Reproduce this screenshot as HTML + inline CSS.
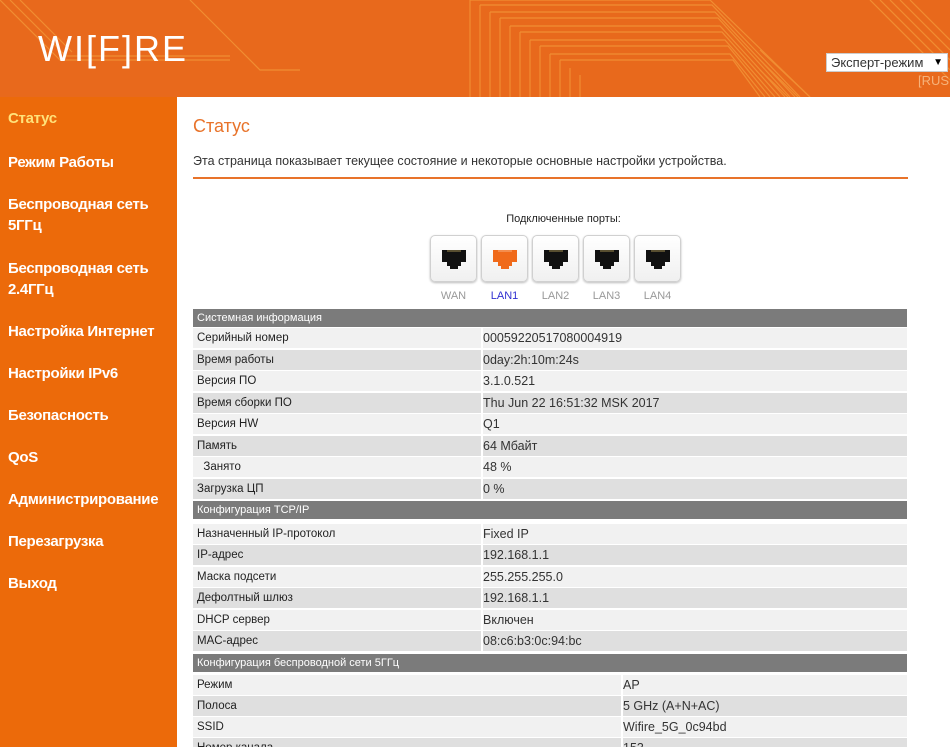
<!DOCTYPE html>
<html><head><meta charset="utf-8"><style>
*{margin:0;padding:0;box-sizing:border-box}
html,body{overflow:hidden}
body{width:950px;height:747px;overflow:hidden;background:#ea6a10;font-family:"Liberation Sans",sans-serif;position:relative}
#hdr{position:absolute;left:0;top:0;width:950px;height:97px;background:#e8691c;overflow:hidden}
#logo{position:absolute;left:38px;top:28px;color:#fff;font-size:36px;letter-spacing:2px;font-weight:normal}
#sel{position:absolute;left:826px;top:53px;width:122px;height:19px;background:#fff;border:1px solid #ccc;font-size:13px;color:#333;padding-left:4px;line-height:17px}
#sel span{position:absolute;right:4px;top:0;font-size:10px;color:#000}
#rus{position:absolute;left:918px;top:73px;color:#f6b27a;font-size:13px}
#side{position:absolute;left:0;top:97px;width:177px;height:650px;background:#ec6a0a}
.m{position:absolute;left:8px;color:#fff;font-weight:bold;font-size:15px;line-height:21px;letter-spacing:-0.3px}
#main{position:absolute;left:177px;top:97px;width:773px;height:650px;background:#fff;overflow:hidden}
h1{position:absolute;left:16px;top:19px;font-size:18px;color:#e8732a;font-weight:normal}
#desc{position:absolute;left:16px;top:57px;font-size:12.5px;color:#333}
#line{position:absolute;left:16px;top:80px;width:715px;height:2px;background:#e8732a}
#pt{position:absolute;left:0;width:773px;top:116px;text-align:center;font-size:11px;color:#222}
.port{position:absolute;top:138px;width:47px;height:47px;border:1px solid #d0d0d0;border-radius:5px;background:linear-gradient(#fff,#f0f0f0);box-shadow:0 1px 2px #bbb}
.port svg{position:absolute;left:11px;top:12px}
.pl{position:absolute;top:193px;width:47px;text-align:center;font-size:11px;color:#999}
.r{position:absolute;left:16px;width:714px;height:20px;font-size:11.5px;color:#222;line-height:20px}
.r .a{position:absolute;left:0;top:0;width:288px;height:20px;padding-left:4px}
.r .b{position:absolute;left:290px;top:0;right:0;height:20px;padding-left:0;font-size:12.5px;color:#333}
.w .a{width:428px}.w .b{left:430px}
.l .a,.l .b{background:#f1f1f1}
.d .a,.d .b{background:#dfdfdf}
.h{background:#7b7b7b;color:#fff;font-size:11px;padding-left:4px;height:18px;line-height:18px}
</style></head><body>
<div id="hdr">
<svg width="950" height="97" style="position:absolute;left:0;top:0" fill="none" stroke="#f39a3a" stroke-width="1.2" opacity=".75">
<g>
<path d="M0 0 L60 60 L230 60"/><path d="M10 0 L66 56 L230 56"/><path d="M20 0 L72 52"/>
<path d="M190 0 L230 40 L260 70 L300 70"/>
<path d="M470 0 L470 97"/><path d="M480 5 L480 97"/><path d="M490 12 L490 97"/><path d="M500 18 L500 97"/><path d="M510 26 L510 97"/><path d="M520 32 L520 97"/><path d="M530 40 L530 97"/><path d="M540 46 L540 97"/><path d="M550 54 L550 97"/><path d="M560 60 L560 97"/><path d="M570 68 L570 97"/><path d="M580 75 L580 97"/>
<path d="M470 0 L710 0 L810 97"/><path d="M480 5 L712 5 L800 97"/><path d="M490 12 L715 12 L795 97"/><path d="M500 18 L718 18 L790 97"/><path d="M510 26 L720 26 L785 97"/><path d="M520 32 L722 32 L780 97"/><path d="M530 40 L725 40 L775 97"/><path d="M540 46 L728 46 L770 97"/><path d="M550 54 L730 54 L765 97"/><path d="M560 60 L733 60 L760 97"/>
<path d="M870 0 L950 80"/><path d="M880 0 L950 70"/><path d="M890 0 L950 60"/><path d="M900 0 L950 50"/><path d="M910 0 L950 40"/>
<path d="M760 50 L810 97"/><path d="M760 60 L798 97"/><path d="M760 70 L788 97"/>
</g></svg>
<div id="logo">WI[F]RE</div>
<div id="sel">Эксперт-режим<span>▼</span></div>
<div id="rus">[RUS</div>
</div>
<div id="side">
<div class="m" style="top:11px;color:#ffe27a">Статус</div>
<div class="m" style="top:55px">Режим Работы</div>
<div class="m" style="top:97px">Беспроводная сеть<br>5ГГц</div>
<div class="m" style="top:161px">Беспроводная сеть<br>2.4ГГц</div>
<div class="m" style="top:224px">Настройка Интернет</div>
<div class="m" style="top:266px">Настройки IPv6</div>
<div class="m" style="top:308px">Безопасность</div>
<div class="m" style="top:350px">QoS</div>
<div class="m" style="top:392px">Администрирование</div>
<div class="m" style="top:434px">Перезагрузка</div>
<div class="m" style="top:476px">Выход</div>
</div>
<div id="main">
<h1>Статус</h1>
<div id="desc">Эта страница показывает текущее состояние и некоторые основные настройки устройства.</div>
<div id="line"></div>
<div id="pt" style="left:0">Подключенные порты:</div>
<div class="port" style="left:253px"><svg width="24" height="22"><path d="M0 2h24v12h-5v4h-3v3h-8v-3h-3v-4h-5z" fill="#111"/><path d="M5 3h14" stroke="#a08a50" stroke-width="1"/></svg></div>
<div class="port" style="left:304px"><svg width="24" height="22"><path d="M0 2h24v12h-5v4h-3v3h-8v-3h-3v-4h-5z" fill="#f06a1a"/><path d="M5 3h14" stroke="#f8b080" stroke-width="1"/></svg></div>
<div class="port" style="left:355px"><svg width="24" height="22"><path d="M0 2h24v12h-5v4h-3v3h-8v-3h-3v-4h-5z" fill="#111"/><path d="M5 3h14" stroke="#a08a50" stroke-width="1"/></svg></div>
<div class="port" style="left:406px"><svg width="24" height="22"><path d="M0 2h24v12h-5v4h-3v3h-8v-3h-3v-4h-5z" fill="#111"/><path d="M5 3h14" stroke="#a08a50" stroke-width="1"/></svg></div>
<div class="port" style="left:457px"><svg width="24" height="22"><path d="M0 2h24v12h-5v4h-3v3h-8v-3h-3v-4h-5z" fill="#111"/><path d="M5 3h14" stroke="#a08a50" stroke-width="1"/></svg></div>
<div class="pl" style="left:253px">WAN</div>
<div class="pl" style="left:304px;color:#3030d0">LAN1</div>
<div class="pl" style="left:355px">LAN2</div>
<div class="pl" style="left:406px">LAN3</div>
<div class="pl" style="left:457px">LAN4</div>

<div class="r h" style="top:212px">Системная информация</div>
<div class="r l" style="top:231px"><div class="a">Серийный номер</div><div class="b">00059220517080004919</div></div>
<div class="r d" style="top:253px"><div class="a">Время работы</div><div class="b">0day:2h:10m:24s</div></div>
<div class="r l" style="top:274px"><div class="a">Версия ПО</div><div class="b">3.1.0.521</div></div>
<div class="r d" style="top:296px"><div class="a">Время сборки ПО</div><div class="b">Thu Jun 22 16:51:32 MSK 2017</div></div>
<div class="r l" style="top:317px"><div class="a">Версия HW</div><div class="b">Q1</div></div>
<div class="r d" style="top:339px"><div class="a">Память</div><div class="b">64 Мбайт</div></div>
<div class="r l" style="top:360px"><div class="a">&nbsp;&nbsp;Занято</div><div class="b">48 %</div></div>
<div class="r d" style="top:382px"><div class="a">Загрузка ЦП</div><div class="b">0 %</div></div>

<div class="r h" style="top:404px">Конфигурация TCP/IP</div>
<div class="r l" style="top:427px"><div class="a">Назначенный IP-протокол</div><div class="b">Fixed IP</div></div>
<div class="r d" style="top:448px"><div class="a">IP-адрес</div><div class="b">192.168.1.1</div></div>
<div class="r l" style="top:470px"><div class="a">Маска подсети</div><div class="b">255.255.255.0</div></div>
<div class="r d" style="top:491px"><div class="a">Дефолтный шлюз</div><div class="b">192.168.1.1</div></div>
<div class="r l" style="top:513px"><div class="a">DHCP сервер</div><div class="b">Включен</div></div>
<div class="r d" style="top:534px"><div class="a">MAC-адрес</div><div class="b">08:c6:b3:0c:94:bc</div></div>

<div class="r h" style="top:557px">Конфигурация беспроводной сети 5ГГц</div>
<div class="r l w" style="top:578px"><div class="a">Режим</div><div class="b">AP</div></div>
<div class="r d w" style="top:599px"><div class="a">Полоса</div><div class="b">5 GHz (A+N+AC)</div></div>
<div class="r l w" style="top:620px"><div class="a">SSID</div><div class="b">Wifire_5G_0c94bd</div></div>
<div class="r d w" style="top:641px"><div class="a">Номер канала</div><div class="b">153</div></div>
</div>
</body></html>
